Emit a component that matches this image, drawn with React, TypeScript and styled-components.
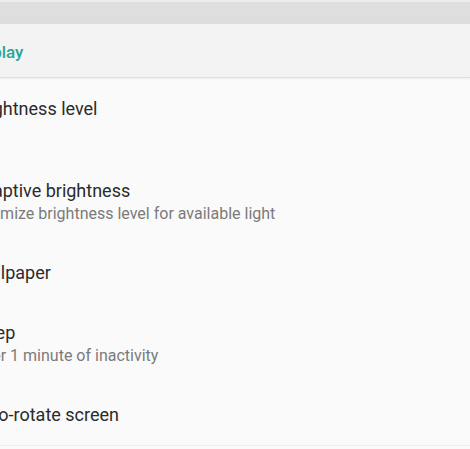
import * as React from 'react';
import styled, { createGlobalStyle } from 'styled-components';

const GlobalStyle = createGlobalStyle`
  html, body {
    margin: 0;
    padding: 0;
    background: #fafafa;
    overflow: hidden;
  }

  body {
    font-family: Roboto, 'Noto Sans', 'Liberation Sans', sans-serif;
    -webkit-font-smoothing: antialiased;
  }
`;

// the screenshot is a crop of a wider screen, its left edge is cut off
export const Screen = styled.div`
  width: 470px;
  height: 449px;
  overflow: hidden;
  background: #fafafa;
  display: flex;
  flex-direction: column;
`;

export const StatusBar = styled.div`
  flex: none;
  height: 22px;
  border-top: 2px solid #ededed;
  background: #dedede;
`;

export const Toolbar = styled.header`
  flex: none;
  height: 54px;
  box-sizing: border-box;
  padding-top: 2px;
  display: flex;
  align-items: center;
  background: #f3f3f3;
  border-bottom: 1px solid #e0e0e0;
  box-shadow: 0 1px 2px rgba(0, 0, 0, 0.06);
  margin-left: -32px;
`;

export const Title = styled.h1`
  margin: 0;
  font-size: 17px;
  font-weight: 500;
  color: #26a69a;
`;

export const List = styled.ul`
  list-style: none;
  margin: 1px 0 0 -29px;
  padding: 0;
`;

export const Row = styled.li`
  display: flex;
  flex-direction: column;
  padding: 18px 16px 18px 0;
`;

export const RowTitle = styled.span`
  font-size: 18px;
  line-height: 24px;
  color: #2b2b2b;
  white-space: nowrap;
`;

export const Summary = styled.span`
  font-size: 16px;
  line-height: 22px;
  min-height: 22px;
  color: #7a7a7a;
  white-space: nowrap;
`;

export const Divider = styled.div`
  height: 1px;
  background: #f0f0f0;
`;

type Pref = { title: string; summary?: string; tall?: boolean };

const prefs: Pref[] = [
  { title: 'Brightness level', tall: true },
  { title: 'Adaptive brightness', summary: 'Optimize brightness level for available light' },
  { title: 'Wallpaper' },
  { title: 'Sleep', summary: 'After 1 minute of inactivity' },
  { title: 'Auto-rotate screen' },
];

export default function App() {
  return (
    <>
      <GlobalStyle />
      <Screen>
        <StatusBar />
        <Toolbar>
          <Title>Display</Title>
        </Toolbar>
        <List>
          {prefs.map(p => (
            <Row key={p.title}>
              <RowTitle>{p.title}</RowTitle>
              {(p.summary || p.tall) && <Summary>{p.summary}</Summary>}
            </Row>
          ))}
        </List>
        <Divider />
      </Screen>
    </>
  );
}
